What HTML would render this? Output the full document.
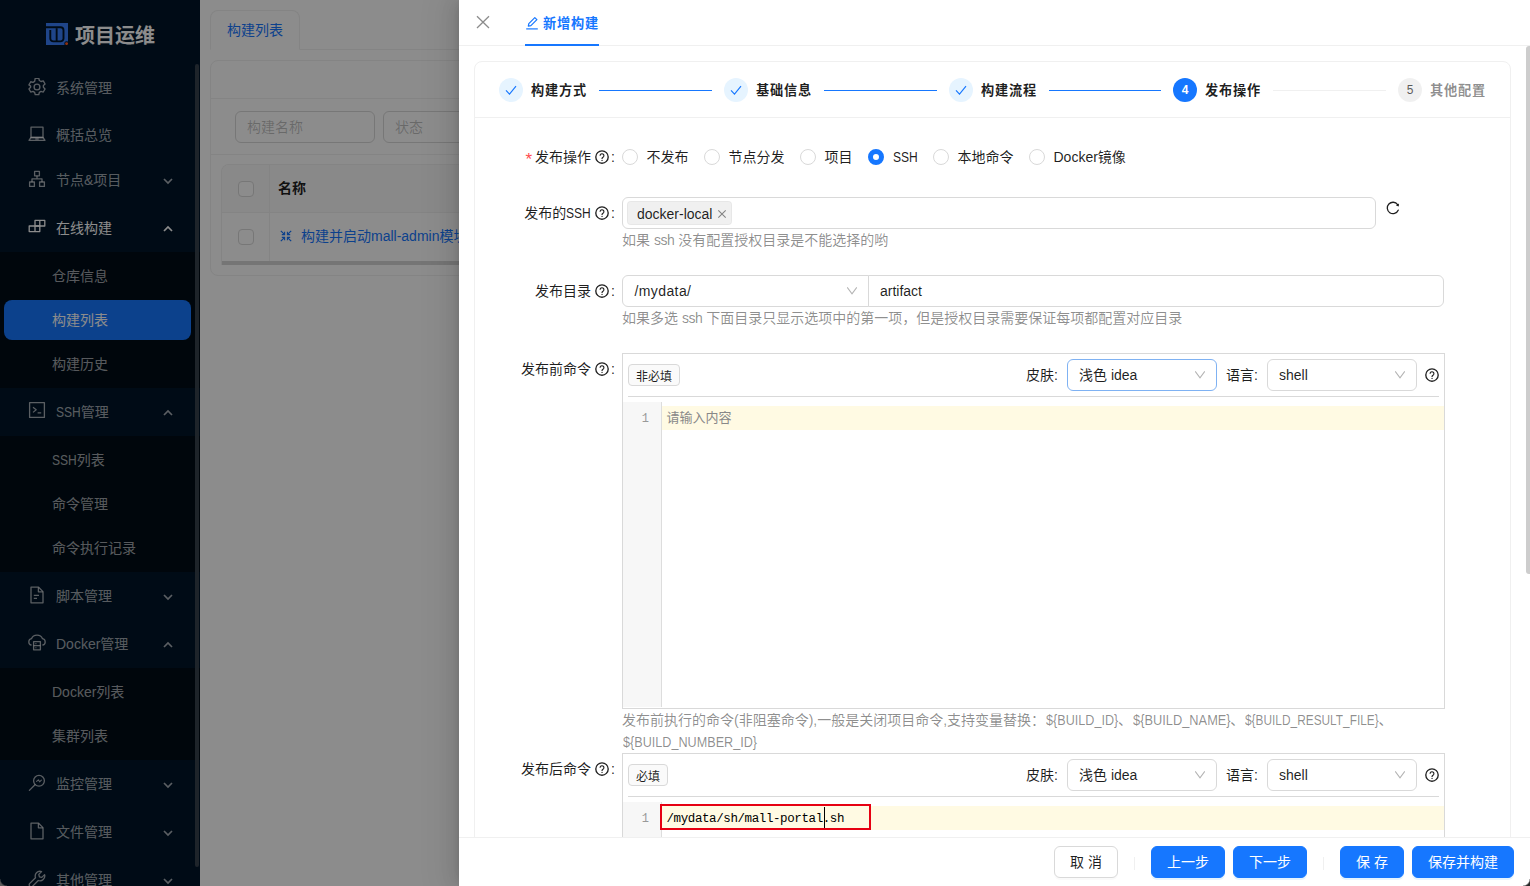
<!DOCTYPE html>
<html lang="zh-CN">
<head>
<meta charset="utf-8">
<title>项目运维 - 新增构建</title>
<style>
*{box-sizing:border-box;margin:0;padding:0}
html,body{width:1530px;height:886px;overflow:hidden;background:#fff}
body{font-family:"Liberation Sans","Noto Sans CJK SC",sans-serif;font-size:14px;color:rgba(0,0,0,.88);position:relative}
.abs{position:absolute}
svg{display:block}
/* ---------- sidebar ---------- */
#side{position:absolute;left:0;top:0;width:200px;height:886px;background:#001529;overflow:hidden}
#side .logo{position:absolute;left:46px;top:23px;height:22px;white-space:nowrap}
#side .logo .lg{position:absolute;left:0;top:0}
#side .logo .lt{position:absolute;left:29px;top:-2px;font-size:20px;line-height:30px;font-weight:700;color:#fff}
#side .sub{position:absolute;left:0;width:200px;background:#000c17}
#side .it{position:absolute;left:0;width:200px;height:40px;line-height:40px;color:rgba(255,255,255,.65);font-size:14px;white-space:nowrap}
#side .it.open,#side .it.cur{color:#fff}
#side .it .ic{position:absolute;left:28px;top:10px;width:18px;height:18px}
#side .it .tx{position:absolute;left:56px;top:0}
#side .it.ch .tx{left:52px}
#side .it .ar{position:absolute;left:163px;top:16px;width:10px;height:10px}
#side .sel{position:absolute;left:4px;width:187px;height:40px;border-radius:8px;background:#1677ff}
#sthumb{position:absolute;left:195px;top:64px;width:4px;height:803px;border-radius:3px;background:#38424d}
/* ---------- main (behind mask) ---------- */
#main{position:absolute;left:200px;top:0;width:1330px;height:886px;background:#fff}
#mask{position:absolute;left:0;top:0;width:1530px;height:886px;background:rgba(0,0,0,.45)}
/* ---------- drawer ---------- */
#drawer{position:absolute;left:459px;top:0;width:1071px;height:886px;background:#fff;box-shadow:-6px 0 16px 0 rgba(0,0,0,.08),-3px 0 6px -4px rgba(0,0,0,.12),-9px 0 28px 8px rgba(0,0,0,.05)}
#main .tabline{position:absolute;left:10px;top:49px;width:1320px;height:1px;background:#f0f0f0}
#main .tab{position:absolute;left:10px;top:10px;width:90px;height:40px;border:1px solid #f0f0f0;border-bottom-color:#fff;border-radius:8px 8px 0 0;background:#fff;color:#1677ff;line-height:38px;text-align:center}
#main .tab span{position:relative;left:0;top:0}
#main .card{position:absolute;left:10px;top:60px;width:1400px;height:216px;border:1px solid #f0f0f0;border-radius:8px;background:#fff}
#main .chead{position:absolute;left:0;top:37px;width:100%;height:1px;background:#f0f0f0}
#main .cline{position:absolute;left:0;top:93px;width:100%;height:1px;background:#f0f0f0}
#main .inp{position:absolute;height:32px;border:1px solid #d9d9d9;border-radius:6px;line-height:30px;padding-left:11px;color:rgba(0,0,0,.25)}
#main .tbl{position:absolute;left:10px;top:103px;width:1380px;height:101px;border:1px solid #f0f0f0;border-bottom:none;border-radius:8px 8px 0 0;overflow:hidden}
#main .tbl .th{position:absolute;left:0;top:0;width:100%;height:47px;background:#fafafa}
#main .tbl .colsep{position:absolute;left:47px;top:0;width:1px;height:97px;background:#f0f0f0}
#main .tbl .rowsep{position:absolute;left:0;top:47px;width:100%;height:1px;background:#f0f0f0}
#main .tbl .cb{position:absolute;width:16px;height:16px;border:1px solid #d9d9d9;border-radius:4px;background:#fff}
#main .tbl .thname{position:absolute;left:56px;top:12px;line-height:22px;font-weight:700;color:rgba(0,0,0,.88)}
#main .tbl .exp{position:absolute;left:58px;top:65px}
#main .tbl .lnk{position:absolute;left:79px;top:60px;line-height:22px;color:#1677ff;white-space:nowrap}
#main .tbl .hscroll{position:absolute;left:0;top:96px;width:100%;height:5px;background:#d6d6d6}
#drawer .hd{position:absolute;left:0;top:0;width:1071px;height:46px;border-bottom:1px solid #f0f0f0}
#drawer .ttl{position:absolute;top:13px;line-height:22px;font-weight:700;font-size:13.200px;letter-spacing:.8px;color:#1677ff;white-space:nowrap}
#drawer .ink{position:absolute;top:44px;height:2px;background:#1677ff}
#drawer .card{position:absolute;border:1px solid #f0f0f0;border-radius:8px}
#drawer .cardline{position:absolute;left:0;top:55px;width:100%;height:1px;background:#f0f0f0}
#drawer .sic{position:absolute;top:78px;width:24px;height:24px;border-radius:50%;font-size:12px;line-height:24px;text-align:center}
#drawer .sic.done{background:#e6f4ff}
#drawer .sic.done svg{position:absolute;left:6px;top:6px}
#drawer .sic.cur{background:#1677ff;color:#fff;font-weight:700;line-height:25px}
#drawer .sic.wait{background:rgba(0,0,0,.06);color:rgba(0,0,0,.65)}
#drawer .stt{position:absolute;top:80px;line-height:22px;font-weight:700;font-size:13.200px;letter-spacing:.8px;white-space:nowrap;color:rgba(0,0,0,.88)}
#drawer .stt.wait{color:rgba(0,0,0,.45)}
#drawer .sln{position:absolute;top:90px;height:1px;background:#1677ff}
#drawer .sln.cur{background:rgba(5,5,5,.06)}
#drawer .lab{position:absolute;right:915px;height:22px;line-height:22px;white-space:nowrap;display:flex;align-items:center;color:rgba(0,0,0,.88)}
#drawer .lab .req{font-style:normal;color:#ff4d4f;font-family:"Liberation Sans",sans-serif;font-size:17px;margin-right:3px;position:relative;top:3px}
#drawer .lab .q{margin-left:4px;color:rgba(0,0,0,.88)}
#drawer .lab b{font-weight:400;margin-left:2px;width:4px;display:inline-block}
#drawer .rad{position:absolute;width:16px;height:16px;border:1px solid #d9d9d9;border-radius:50%;background:#fff}
#drawer .rad.on{border:5px solid #1677ff}
#drawer .rtx{position:absolute;line-height:22px;white-space:nowrap}
#drawer .box{position:absolute;border:1px solid #d9d9d9;border-radius:6px;background:#fff}
#drawer .box.foc{border-color:#7fb2f3}
#drawer .box .val{position:absolute;left:11px;top:4px;line-height:22px;white-space:nowrap}
#drawer .box .chev{position:absolute;top:10px}
#drawer .tag2{position:absolute;left:4px;top:3px;height:24px;width:105px;border-radius:4px;background:rgba(0,0,0,.06);border:1px solid rgba(5,5,5,.04);line-height:22px;white-space:nowrap}
#drawer .tag2 span{position:absolute;left:9px;top:1px}
#drawer .tag2 svg{position:absolute;left:89px;top:7px}
#drawer .help{position:absolute;line-height:22px;color:rgba(0,0,0,.45);white-space:nowrap}
#drawer .ed{position:absolute;border:1px solid #d9d9d9;background:#fff;overflow:hidden}
#drawer .ed .tag1{position:absolute;left:5px;top:10px;height:22px;border:1px solid #d9d9d9;border-radius:4px;background:#fafafa;font-size:12px;line-height:24px;overflow:hidden;text-align:center;white-space:nowrap}
#drawer .ed .tl{position:absolute;top:10px;line-height:22px;white-space:nowrap}
#drawer .ed .qq{position:absolute;left:802px;top:14px}
#drawer .ed .dv{position:absolute;left:5px;top:42px;width:811px;height:1px;background:#d9d9d9}
#drawer .ed .gut{position:absolute;left:0;top:48px;width:39px;background:#f7f7f7;border-right:1px solid #ddd}
#drawer .ed .al{position:absolute;left:39px;top:52px;width:782px;height:24px;background:#fffae3}
#drawer .ed .ln{position:absolute;left:0;top:53px;width:33px;padding-right:7px;text-align:right;font-family:"Liberation Mono",monospace;font-size:12px;line-height:24px;color:#999}
#drawer .ed .ph{position:absolute;left:43.400px;top:52px;font-size:13px;line-height:24px;color:#888;white-space:nowrap}
#drawer .ed .code{position:absolute;left:43.5px;top:53px;font-family:"Liberation Mono",monospace;font-size:12.5px;letter-spacing:-0.4px;line-height:24px;color:#000;white-space:nowrap}
#drawer .ed .cur{position:absolute;left:201px;top:53px;width:1px;height:22px;background:#000}
#drawer .ed .red{position:absolute;left:37px;top:50px;width:211px;height:26px;border:2px solid #e60012}
#drawer .vthumb{position:absolute;left:1067px;top:46px;width:4px;height:528px;background:#cdcdcd;border-radius:3px 0 0 3px}
#drawer .ft{position:absolute;left:0;top:837px;width:1071px;height:49px;border-top:1px solid #f0f0f0;background:#fff}
#drawer .btn{position:absolute;top:8px;height:32px;border-radius:6px;border:1px solid #d9d9d9;background:#fff;line-height:30px;text-align:center;white-space:nowrap;box-shadow:0 2px 0 rgba(0,0,0,.02)}
#drawer .btn.pr{background:#1677ff;border-color:#1677ff;color:#fff;box-shadow:0 2px 0 rgba(5,145,255,.1)}
#drawer .vd{position:absolute;top:19px;width:1px;height:13px;background:rgba(5,5,5,.06)}
#drawer .ssh,#side .ssh{display:inline-block;transform-origin:0 50%;transform:scaleX(.86);margin-right:-4px}
#drawer .lsm{letter-spacing:-.4px}
#drawer .v{display:inline-block;margin-left:.6px;transform-origin:0 50%;line-height:22px}
.corner{position:absolute;width:7px;height:7px;bottom:0}
.corner.br{right:0;background:radial-gradient(circle at 0 0,rgba(40,40,40,0) 6px,#2a2a2a 7.500px)}
.corner.bl{left:0;background:radial-gradient(circle at 100% 0,rgba(90,90,90,0) 6px,#5a5a5a 7.500px)}
</style>
</head>
<body>
<div id="side">
<div class="logo"><svg class="lg" viewBox="0 0 22 22" width="22" height="22"><rect width="22" height="22" fill="#3a7ffa"/><path d="M0 4.300h14.500a3 3 0 0 1 3 3v8.100a3 3 0 0 1-3 3H7.300a3 3 0 0 1-3-3V7" fill="none" stroke="#001529" stroke-width="1.900"/><path d="M10.650 5.200v13" fill="none" stroke="#001529" stroke-width="1.900"/><circle cx="20.600" cy="20.600" r="2.300" fill="#001529"/><circle cx="20.600" cy="20.600" r="1.450" fill="#ff5a1f"/></svg><span class="lt">项目运维</span></div>
<div class="sub" style="top:252px;height:136px"></div>
<div class="sub" style="top:436px;height:136px"></div>
<div class="sub" style="top:668px;height:92px"></div>
<div class="sel" style="top:300px"></div>
<div class="it" style="top:68px"><span class="ic"><svg viewBox="0 0 18 18" width="18" height="18" fill="none" stroke="currentColor" stroke-width="1.200" stroke-linejoin="round"><g transform="translate(9 9) scale(1.120) translate(-9 -9)"><circle cx="9" cy="9" r="2.600"/><path d="M7.400 1.200h3.200l.5 2 1.500.9 2-.6 1.600 2.800-1.500 1.400v1.600l1.500 1.400-1.600 2.800-2-.6-1.500.9-.5 2H7.400l-.5-2-1.500-.9-2 .6-1.600-2.800 1.500-1.400V8.200L1.800 7.100l1.600-2.800 2 .6 1.500-.9z"/></g></svg></span><span class="tx">系统管理</span></div>
<div class="it" style="top:115px"><span class="ic"><svg viewBox="0 0 18 18" width="18" height="18" fill="none" stroke="currentColor" stroke-width="1.3" stroke-linejoin="round"><path d="M3 2.2h12v10.3H3z"/><path d="M1 15.3l2-2.8h12l2 2.8z"/><path d="M7.3 14h3.4"/></svg></span><span class="tx">概括总览</span></div>
<div class="it" style="top:160px"><span class="ic"><svg viewBox="0 0 18 18" width="18" height="18" fill="none" stroke="currentColor" stroke-width="1.3" stroke-linejoin="round"><path d="M6.6 1.4h4.8v4.4H6.6z"/><path d="M1.6 12h4.8v4.4H1.6z"/><path d="M11.6 12h4.8v4.4h-4.8z"/><path d="M9 5.8v3M4 12V8.8h10V12"/></svg></span><span class="tx">节点&amp;项目</span><svg class="ar" viewBox="0 0 10 10" width="10" height="10" fill="none" stroke="currentColor" stroke-width="1.700"><path d="M1 3L5 7l4-4"/></svg></div>
<div class="it open" style="top:208px"><span class="ic"><svg viewBox="0 0 18 18" width="18" height="18" fill="none" stroke="currentColor" stroke-width="1.3" stroke-linejoin="round"><path d="M7 2.400h9.800v5.600H7z"/><path d="M1.200 8h10.600v5.600H1.200z"/><path d="M7 8v5.600M11.800 2.400V8"/></svg></span><span class="tx">在线构建</span><svg class="ar" viewBox="0 0 10 10" width="10" height="10" fill="none" stroke="currentColor" stroke-width="1.700"><path d="M1 7L5 3l4 4"/></svg></div>
<div class="it ch" style="top:256px"><span class="tx">仓库信息</span></div>
<div class="it ch cur" style="top:300px"><span class="tx">构建列表</span></div>
<div class="it ch" style="top:344px"><span class="tx">构建历史</span></div>
<div class="it" style="top:392px"><span class="ic" style="top:9px"><svg viewBox="0 0 18 18" width="18" height="18" fill="none" stroke="currentColor" stroke-width="1.3" stroke-linejoin="round"><path d="M1.6 1.6h14.8v14.8H1.6z"/><path d="M5 6.2l3.2 2.6L5 11.4M9.6 11.8h3.6" stroke-width="1.2"/></svg></span><span class="tx"><span class="ssh">SSH</span>管理</span><svg class="ar" viewBox="0 0 10 10" width="10" height="10" fill="none" stroke="currentColor" stroke-width="1.700"><path d="M1 7L5 3l4 4"/></svg></div>
<div class="it ch" style="top:440px"><span class="tx"><span class="ssh">SSH</span>列表</span></div>
<div class="it ch" style="top:484px"><span class="tx">命令管理</span></div>
<div class="it ch" style="top:528px"><span class="tx">命令执行记录</span></div>
<div class="it" style="top:576px"><span class="ic"><svg viewBox="0 0 18 18" width="18" height="18" fill="none" stroke="currentColor" stroke-width="1.3" stroke-linejoin="round"><path d="M3 1.2h7.6L15 5.6v11.2H3z"/><path d="M10.4 1.4v4.4h4.4"/><path d="M5.8 9.4h5.2M5.8 12.4h3.2"/></svg></span><span class="tx">脚本管理</span><svg class="ar" viewBox="0 0 10 10" width="10" height="10" fill="none" stroke="currentColor" stroke-width="1.700"><path d="M1 3L5 7l4-4"/></svg></div>
<div class="it" style="top:624px"><span class="ic"><svg viewBox="0 0 18 18" width="18" height="18" fill="none" stroke="currentColor" stroke-width="1.3" stroke-linejoin="round"><path d="M3.6 11.2C2 10.8.8 9.6.8 7.9c0-1.6 1.1-2.9 2.7-3.2C4.300 2.600 6.400 1.200 9 1.200s4.700 1.400 5.500 3.500c1.600.3 2.700 1.600 2.700 3.200 0 1.700-1.200 2.900-2.800 3.300"/><path d="M5.600 7.600h6.800v8.200H5.600z"/><path d="M5.600 11.600h6.800M7.400 9.600h1M7.400 13.700h1" stroke-width="1.1"/></svg></span><span class="tx">Docker管理</span><svg class="ar" viewBox="0 0 10 10" width="10" height="10" fill="none" stroke="currentColor" stroke-width="1.700"><path d="M1 7L5 3l4 4"/></svg></div>
<div class="it ch" style="top:672px"><span class="tx">Docker列表</span></div>
<div class="it ch" style="top:716px"><span class="tx">集群列表</span></div>
<div class="it" style="top:764px"><span class="ic"><svg viewBox="0 0 18 18" width="18" height="18" fill="none" stroke="currentColor" stroke-width="1.3" stroke-linejoin="round" stroke-linecap="round"><circle cx="11" cy="6.800" r="5.400"/><path d="M7 10.800L1.400 16.400"/><path d="M8.600 7.400l1.800-1.600 1.200 2 1.800-1.600" stroke-width="1.1"/></svg></span><span class="tx">监控管理</span><svg class="ar" viewBox="0 0 10 10" width="10" height="10" fill="none" stroke="currentColor" stroke-width="1.700"><path d="M1 3L5 7l4-4"/></svg></div>
<div class="it" style="top:812px"><span class="ic"><svg viewBox="0 0 18 18" width="18" height="18" fill="none" stroke="currentColor" stroke-width="1.3" stroke-linejoin="round"><path d="M3 1.200h7.600L15 5.600v11.200H3z"/><path d="M10.400 1.400v4.400h4.400"/></svg></span><span class="tx">文件管理</span><svg class="ar" viewBox="0 0 10 10" width="10" height="10" fill="none" stroke="currentColor" stroke-width="1.700"><path d="M1 3L5 7l4-4"/></svg></div>
<div class="it" style="top:860px"><span class="ic"><svg viewBox="0 0 18 18" width="18" height="18" fill="none" stroke="currentColor" stroke-width="1.3" stroke-linejoin="round"><path d="M16.600 4.600l-2.800 2.800-2.400-.6-.6-2.400 2.800-2.800c-1.800-.6-3.800-.2-5.100 1.200-1.300 1.400-1.600 3.200-1 4.900L1.800 13.400c-.8.800-.8 2 0 2.800s2 .8 2.800 0l5.700-5.700c1.700.6 3.600.3 4.900-1 1.400-1.300 1.900-3.200 1.400-4.900z"/></svg></span><span class="tx">其他管理</span><svg class="ar" viewBox="0 0 10 10" width="10" height="10" fill="none" stroke="currentColor" stroke-width="1.700"><path d="M1 3L5 7l4-4"/></svg></div>
<div id="sthumb"></div>
</div>
<div id="main">
<div class="tabline"></div>
<div class="tab"><span>构建列表</span></div>
<div class="card">
  <div class="chead"></div>
  <div class="inp" style="left:24px;top:50px;width:140px"><span>构建名称</span></div>
  <div class="inp" style="left:172px;top:50px;width:140px"><span>状态</span></div>
  <div class="cline"></div>
  <div class="tbl">
    <div class="th"></div>
    <div class="colsep"></div>
    <div class="rowsep"></div>
    <div class="cb" style="left:16px;top:15.500px"></div>
    <div class="cb" style="left:16px;top:63.500px"></div>
    <div class="thname">名称</div>
    <svg class="exp" viewBox="0 0 12 12" width="12" height="12" fill="none" stroke="#1677ff" stroke-width="1.200"><path d="M0.800 0.800l3.400 3.400M11.200 0.800L7.800 4.200M0.800 11.200l3.400-3.400M11.200 11.200L7.800 7.800"/><path d="M4.600 1.800v2.800H1.800M7.400 1.800v2.800h2.800M4.600 10.200V7.400H1.800M7.400 10.200V7.400h2.800" stroke-width="1.100"/></svg>
    <div class="lnk">构建并启动mall-admin模块</div>
    <div class="hscroll"></div>
  </div>
</div>

</div>
<div id="mask"></div>
<div id="drawer">
<div class="hd">
<svg class="abs" style="left:17px;top:15px" viewBox="0 0 14 14" width="14" height="14" stroke="rgba(0,0,0,.45)" stroke-width="1.300" fill="none"><path d="M1 1.200l12 11.800M13 1.200L1 13"/></svg>
<svg class="abs" style="left:66px;top:16px" viewBox="0 0 14 14" width="14" height="14" stroke="#1677ff" stroke-width="1.200" fill="none" stroke-linejoin="round"><path d="M1.200 12.900h11.600"/><path d="M3.300 10.200l.5-2.600 6-6 2.100 2.100-6 6z"/></svg>
<div class="ttl" style="left:84px">新增构建</div>
<div class="ink" style="left:66px;width:74px"></div>
</div>
<div class="card" style="left:15px;top:61px;width:1037px;height:900px"><div class="cardline"></div></div>
<div class="sic done" style="left:40px"><svg viewBox="0 0 12 12" width="12" height="12" fill="none" stroke="#1677ff" stroke-width="1.150"><path d="M1 6.400l3.500 3.700L11 2.200"/></svg></div>
<div class="stt done" style="left:72px">构建方式</div>
<div class="sln done" style="left:140px;width:113px"></div>
<div class="sic done" style="left:265px"><svg viewBox="0 0 12 12" width="12" height="12" fill="none" stroke="#1677ff" stroke-width="1.150"><path d="M1 6.400l3.500 3.700L11 2.200"/></svg></div>
<div class="stt done" style="left:297px">基础信息</div>
<div class="sln done" style="left:365px;width:113px"></div>
<div class="sic done" style="left:490px"><svg viewBox="0 0 12 12" width="12" height="12" fill="none" stroke="#1677ff" stroke-width="1.150"><path d="M1 6.400l3.500 3.700L11 2.200"/></svg></div>
<div class="stt done" style="left:522px">构建流程</div>
<div class="sln done" style="left:590px;width:112px"></div>
<div class="sic cur" style="left:714px">4</div>
<div class="stt cur" style="left:746px">发布操作</div>
<div class="sln cur" style="left:814px;width:113px"></div>
<div class="sic wait" style="left:939px">5</div>
<div class="stt wait" style="left:971px">其他配置</div>
<div class="lab" style="top:146px"><i class="req">*</i><span>发布操作</span><svg class="q" viewBox="0 0 14 14" width="14" height="14" fill="none" stroke="currentColor"><circle cx="7" cy="7" r="6.200" stroke-width="1.350"/><path d="M5.100 5.700a1.900 1.900 0 1 1 2.900 1.600c-.6.400-.95.700-.95 1.300v.3" stroke-width="1.150"/><circle cx="7.050" cy="10.400" r=".650" fill="currentColor" stroke="none"/></svg><b>:</b></div>
<div class="lab" style="top:202px"><span>发布的<span class="ssh">SSH</span></span><svg class="q" viewBox="0 0 14 14" width="14" height="14" fill="none" stroke="currentColor"><circle cx="7" cy="7" r="6.200" stroke-width="1.350"/><path d="M5.100 5.700a1.900 1.900 0 1 1 2.900 1.600c-.6.400-.95.700-.95 1.300v.3" stroke-width="1.150"/><circle cx="7.050" cy="10.400" r=".650" fill="currentColor" stroke="none"/></svg><b>:</b></div>
<div class="lab" style="top:280px"><span>发布目录</span><svg class="q" viewBox="0 0 14 14" width="14" height="14" fill="none" stroke="currentColor"><circle cx="7" cy="7" r="6.200" stroke-width="1.350"/><path d="M5.100 5.700a1.900 1.900 0 1 1 2.900 1.600c-.6.400-.95.700-.95 1.300v.3" stroke-width="1.150"/><circle cx="7.050" cy="10.400" r=".650" fill="currentColor" stroke="none"/></svg><b>:</b></div>
<div class="lab" style="top:358px"><span>发布前命令</span><svg class="q" viewBox="0 0 14 14" width="14" height="14" fill="none" stroke="currentColor"><circle cx="7" cy="7" r="6.200" stroke-width="1.350"/><path d="M5.100 5.700a1.900 1.900 0 1 1 2.900 1.600c-.6.400-.95.700-.95 1.300v.3" stroke-width="1.150"/><circle cx="7.050" cy="10.400" r=".650" fill="currentColor" stroke="none"/></svg><b>:</b></div>
<div class="lab" style="top:758px"><span>发布后命令</span><svg class="q" viewBox="0 0 14 14" width="14" height="14" fill="none" stroke="currentColor"><circle cx="7" cy="7" r="6.200" stroke-width="1.350"/><path d="M5.100 5.700a1.900 1.900 0 1 1 2.900 1.600c-.6.400-.95.700-.95 1.300v.3" stroke-width="1.150"/><circle cx="7.050" cy="10.400" r=".650" fill="currentColor" stroke="none"/></svg><b>:</b></div>
<div class="rad" style="left:163px;top:149px"></div><div class="rtx" style="left:187.5px;top:146px">不发布</div>
<div class="rad" style="left:245px;top:149px"></div><div class="rtx" style="left:269.5px;top:146px">节点分发</div>
<div class="rad" style="left:341px;top:149px"></div><div class="rtx" style="left:365.5px;top:146px">项目</div>
<div class="rad on" style="left:409px;top:149px"></div><div class="rtx" style="left:433.5px;top:146px"><span class="ssh">SSH</span></div>
<div class="rad" style="left:474px;top:149px"></div><div class="rtx" style="left:498.5px;top:146px">本地命令</div>
<div class="rad" style="left:570px;top:149px"></div><div class="rtx" style="left:594.5px;top:146px">Docker镜像</div>
<div class="box" style="left:163px;top:197px;width:754px;height:32px"><div class="tag2"><span>docker-local</span><svg viewBox="0 0 10 10" width="10" height="10" stroke="rgba(0,0,0,.45)" stroke-width="1.100" fill="none"><path d="M1.300 1.300l7.400 7.400M8.700 1.300L1.300 8.700"/></svg></div></div>
<svg class="abs" style="left:927px;top:201px" viewBox="0 0 14 14" width="14" height="14" fill="none" stroke="rgba(0,0,0,.88)" stroke-width="1.300" stroke-linecap="round"><path d="M12.200 9.200A5.700 5.700 0 1 1 11.600 3.600"/><path d="M13 2.400l-.2 3-2.900-.9z" fill="rgba(0,0,0,.88)" stroke="none"/></svg>
<div class="help" style="left:163px;top:229px">如果 <span class="lsm">ssh</span> 没有配置授权目录是不能选择的哟</div>
<div class="box" style="left:163px;top:275px;width:247px;height:32px;border-radius:6px 0 0 6px"><span class="val" style="letter-spacing:.4px;left:11.5px">/mydata/</span><svg class="chev" style="left:224px" viewBox="0 0 10 10" width="10" height="10" fill="none" stroke="rgba(0,0,0,.3)" stroke-width="1.050"><path d="M0.200 1.400L5 7.800l4.800-6.400"/></svg></div>
<div class="box" style="left:409px;top:275px;width:576px;height:32px;border-radius:0 6px 6px 0"><span class="val">artifact</span></div>
<div class="help" style="left:163px;top:307px">如果多选 <span class="lsm">ssh</span> 下面目录只显示选项中的第一项，但是授权目录需要保证每项都配置对应目录</div>
<div class="ed" style="left:163px;top:353px;width:823px;height:356px">
<div class="tag1" style="width:52px">非必填</div>
<div class="tl" style="left:403px">皮肤:</div>
<div class="box foc" style="left:444px;top:5px;width:150px;height:32px"><span class="val">浅色 idea</span><svg class="chev" style="left:127px" viewBox="0 0 10 10" width="10" height="10" fill="none" stroke="rgba(0,0,0,.3)" stroke-width="1.050"><path d="M0.200 1.400L5 7.800l4.800-6.400"/></svg></div>
<div class="tl" style="left:603px">语言:</div>
<div class="box" style="left:644px;top:5px;width:150px;height:32px"><span class="val">shell</span><svg class="chev" style="left:127px" viewBox="0 0 10 10" width="10" height="10" fill="none" stroke="rgba(0,0,0,.3)" stroke-width="1.050"><path d="M0.200 1.400L5 7.800l4.800-6.400"/></svg></div>
<div class="qq"><svg class="q" viewBox="0 0 14 14" width="14" height="14" fill="none" stroke="currentColor"><circle cx="7" cy="7" r="6.200" stroke-width="1.350"/><path d="M5.100 5.700a1.900 1.900 0 1 1 2.900 1.600c-.6.400-.95.700-.95 1.300v.3" stroke-width="1.150"/><circle cx="7.050" cy="10.400" r=".650" fill="currentColor" stroke="none"/></svg></div>
<div class="dv"></div>
<div class="gut" style="height:305px"></div>
<div class="al"></div><div class="ln">1</div>
<div class="ph">请输入内容</div>
</div>
<div class="help" style="left:163px;top:709px;width:822px;white-space:normal">发布前执行的命令(非阻塞命令),一般是关闭项目命令,支持变量替换：<span class="v" style="transform:scaleX(0.901);margin-right:-7.97px">${BUILD_ID}</span>、<span class="v" style="transform:scaleX(0.916);margin-right:-8.91px">${BUILD_NAME}</span>、<span class="v" style="transform:scaleX(0.848);margin-right:-23.92px">${BUILD_RESULT_FILE}</span>、<br><span class="v" style="transform:scaleX(0.902);margin-right:-14.62px">${BUILD_NUMBER_ID}</span></div>
<div class="ed" style="left:163px;top:753px;width:823px;height:200px">
<div class="tag1" style="width:40px">必填</div>
<div class="tl" style="left:403px">皮肤:</div>
<div class="box" style="left:444px;top:5px;width:150px;height:32px"><span class="val">浅色 idea</span><svg class="chev" style="left:127px" viewBox="0 0 10 10" width="10" height="10" fill="none" stroke="rgba(0,0,0,.3)" stroke-width="1.050"><path d="M0.200 1.400L5 7.800l4.800-6.400"/></svg></div>
<div class="tl" style="left:603px">语言:</div>
<div class="box" style="left:644px;top:5px;width:150px;height:32px"><span class="val">shell</span><svg class="chev" style="left:127px" viewBox="0 0 10 10" width="10" height="10" fill="none" stroke="rgba(0,0,0,.3)" stroke-width="1.050"><path d="M0.200 1.400L5 7.800l4.800-6.400"/></svg></div>
<div class="qq"><svg class="q" viewBox="0 0 14 14" width="14" height="14" fill="none" stroke="currentColor"><circle cx="7" cy="7" r="6.200" stroke-width="1.350"/><path d="M5.100 5.700a1.900 1.900 0 1 1 2.900 1.600c-.6.400-.95.700-.95 1.300v.3" stroke-width="1.150"/><circle cx="7.050" cy="10.400" r=".650" fill="currentColor" stroke="none"/></svg></div>
<div class="dv"></div>
<div class="gut" style="height:149px"></div>
<div class="al"></div><div class="ln">1</div>
<div class="code">/mydata/sh/mall-portal.sh</div><div class="cur"></div><div class="red"></div>
</div>
<div class="vthumb"></div>
<div class="ft">
<div class="btn" style="left:595px;width:64px">取 消</div>
<div class="vd" style="left:675px"></div>
<div class="btn pr" style="left:692px;width:74px">上一步</div>
<div class="btn pr" style="left:774px;width:74px">下一步</div>
<div class="vd" style="left:864px"></div>
<div class="btn pr" style="left:881px;width:64px">保 存</div>
<div class="btn pr" style="left:953px;width:102px">保存并构建</div>
</div>
</div>
<div class="corner br"></div>
<div class="corner bl"></div>

</body>
</html>
